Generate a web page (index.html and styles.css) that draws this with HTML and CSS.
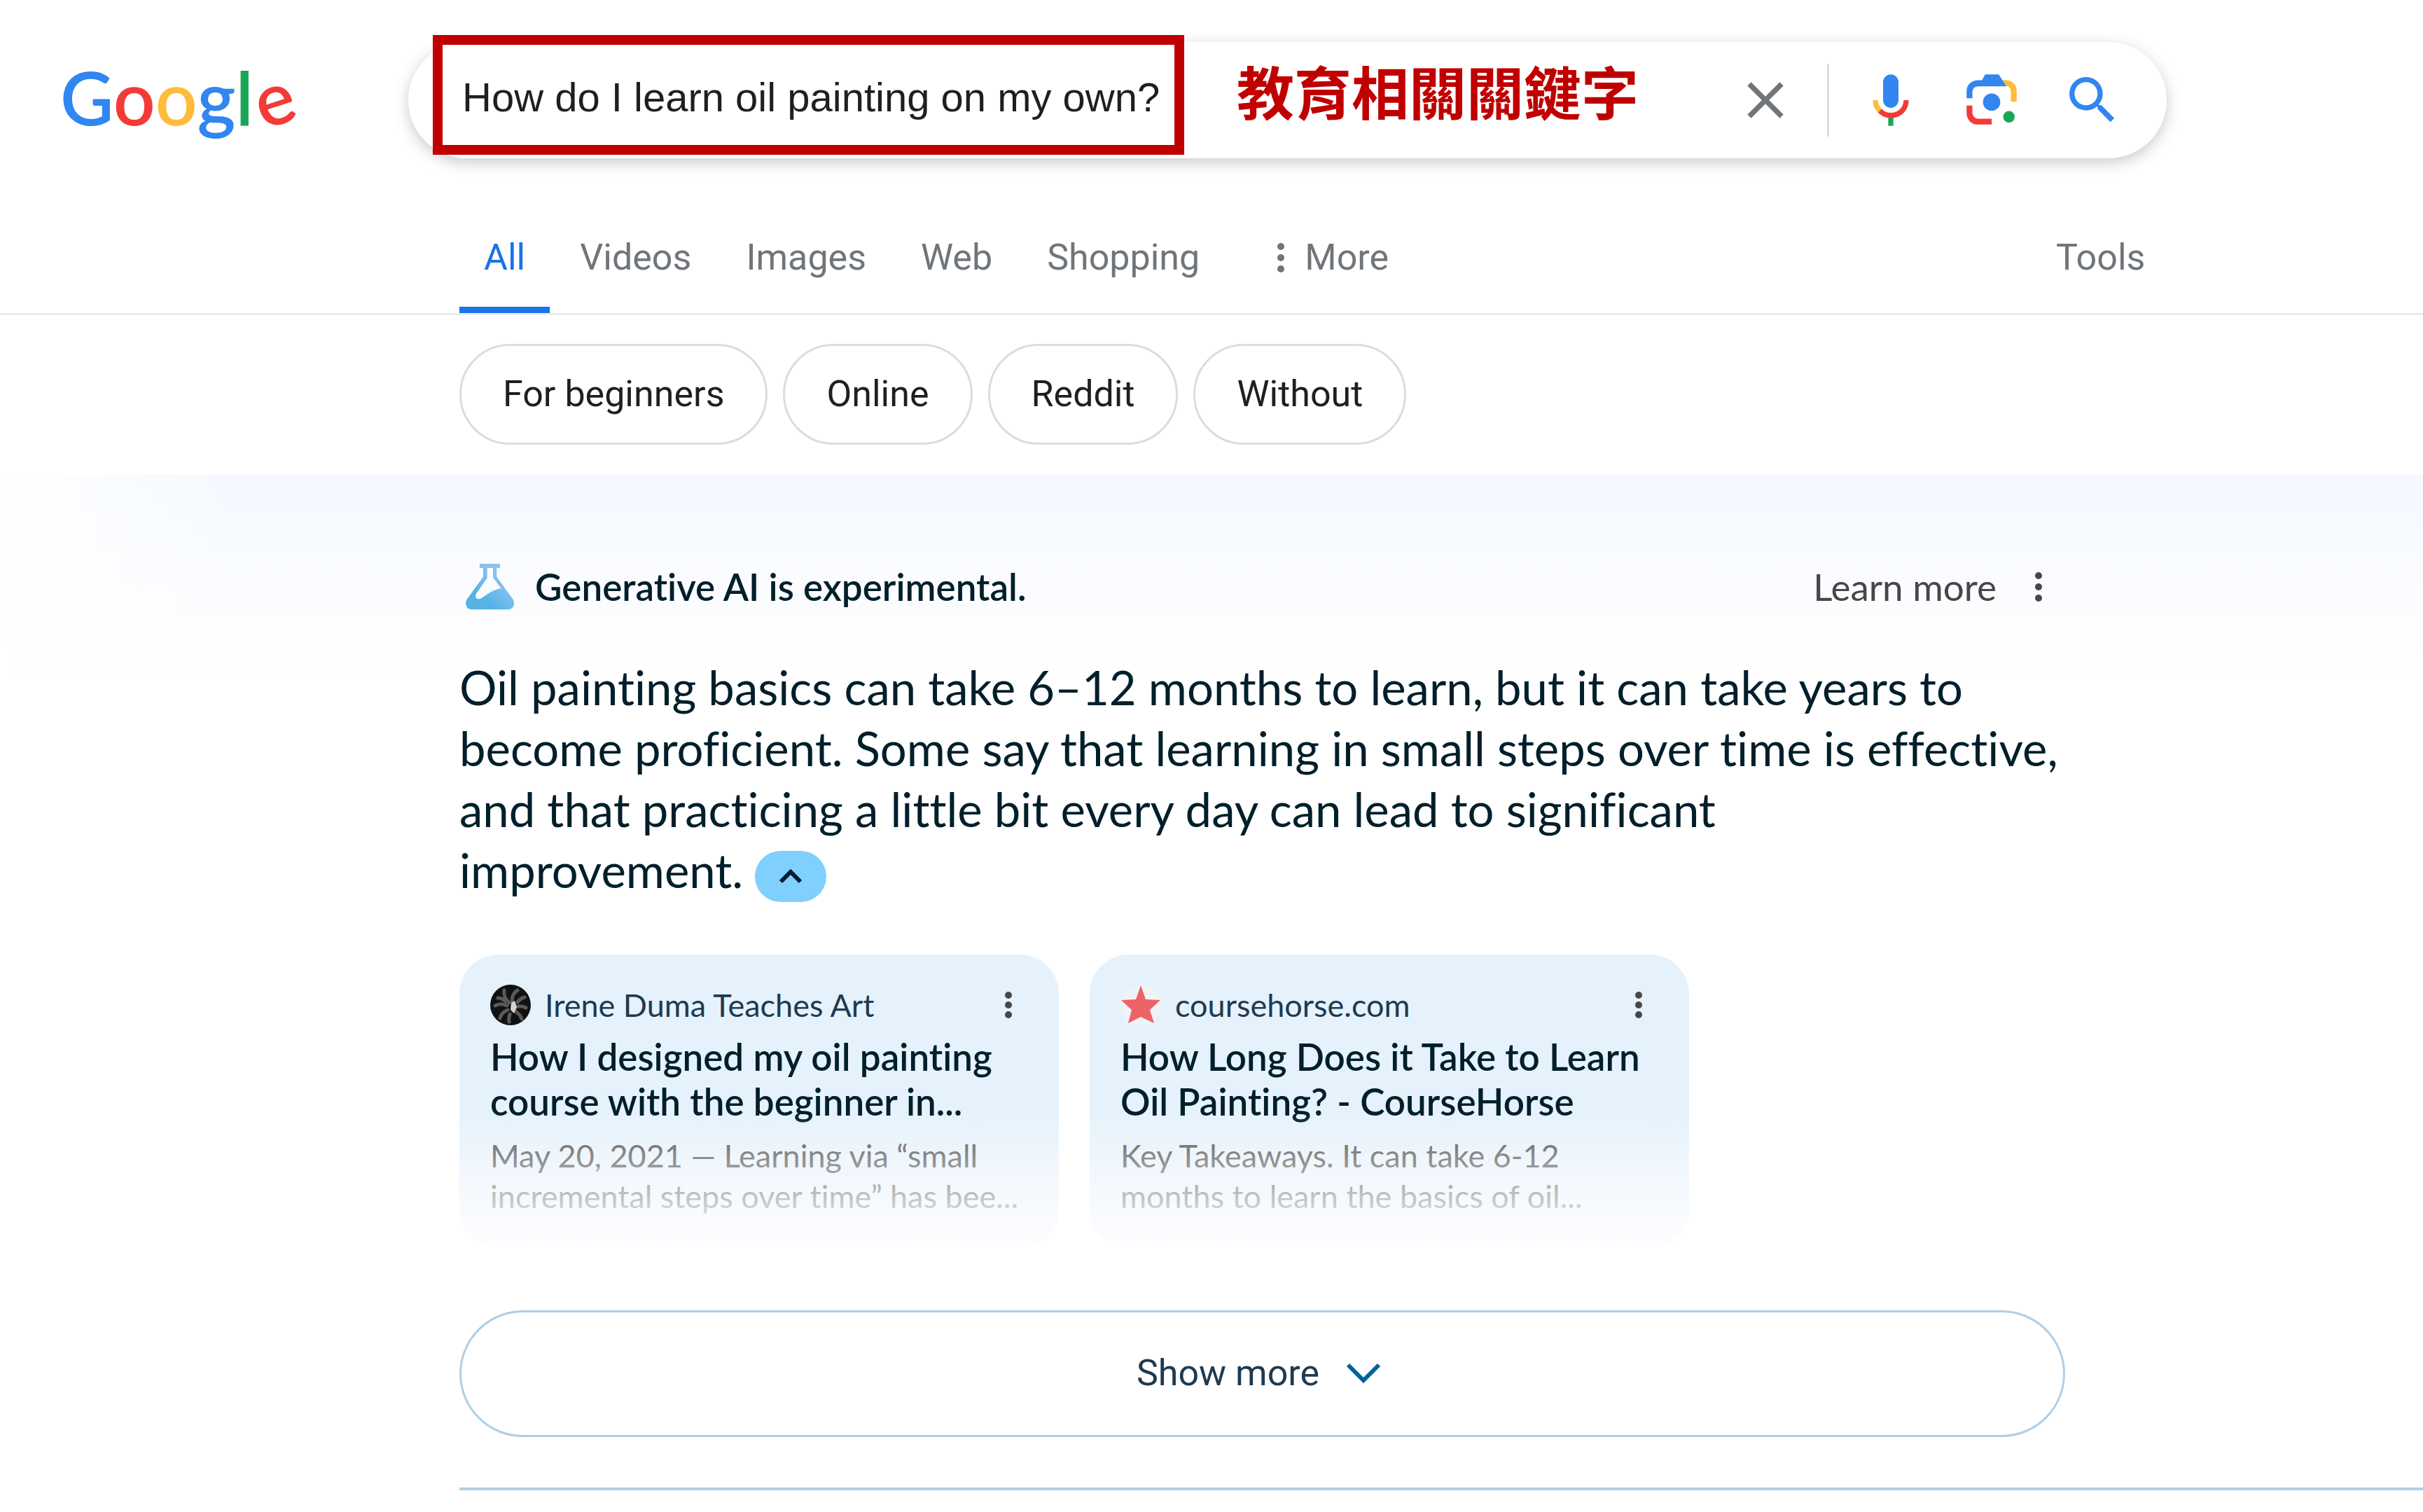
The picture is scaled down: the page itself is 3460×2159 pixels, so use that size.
FILE: index.html
```
<!DOCTYPE html>
<html lang="en">
<head>
  <meta charset="UTF-8">
  <title>How do I learn oil painting on my own? - Google Search</title>
  <link rel="stylesheet" href="styles.css">
</head>
<body>
  <header class="header">
    <a class="logo" href="#" aria-label="Google"><span class="blue">G</span><span class="red">o</span><span class="yellow">o</span><span class="blue">g</span><span class="green">l</span><span class="red tilt">e</span></a>
    <form class="search-bar">
      <input class="query" type="text" aria-label="Search" value="How do I learn oil painting on my own?">
      <span class="note" lang="zh-Hant">教育相關關鍵字</span>
      <div class="search-icons">
        <button type="button" class="icon-btn" aria-label="Clear">
          <svg viewBox="0 0 24 24"><path fill="#70757a" d="M19 6.41L17.59 5 12 10.59 6.41 5 5 6.41 10.59 12 5 17.59 6.41 19 12 13.41 17.59 19 19 17.59 13.41 12z"/></svg>
        </button>
        <span class="separator"></span>
        <button type="button" class="icon-btn" aria-label="Search by voice">
          <svg viewBox="0 0 24 24">
            <path fill="#3186f0" d="M12 15c1.66 0 3-1.31 3-2.97V5.01C15 3.35 13.66 2 12 2S9 3.34 9 5.01v7.02C9 13.69 10.34 15 12 15z"/>
            <path fill="#1aa657" d="M11 18.08h2V22h-2z"/>
            <path fill="#ffbc3b" d="M7.05 16.87C5.78 15.54 5 14.04 5 12h2c0 1.45.56 2.42 1.47 3.38v.32l-1.15 1.18z"/>
            <path fill="#f23b37" d="M12 16.93a4.97 5.25 0 0 1-3.54-1.55l-1.41 1.49C8.31 18.21 10.07 19 12 19c3.87 0 6.99-2.92 6.99-7H17c0 2.92-2.24 4.93-5 4.93z"/>
          </svg>
        </button>
        <button type="button" class="icon-btn" aria-label="Search by image">
          <svg viewBox="0 0 192 192">
            <circle fill="#1aa657" cx="150" cy="148" r="18"/>
            <circle fill="#3186f0" cx="96" cy="102" r="27"/>
            <path fill="#f23b37" d="M18 136c0 20 14 36 34 36h44v-18H56c-12 0-20-9-20-21v-20H18z"/>
            <path fill="#ffbc3b" d="M174 68c0-20-14-34-34-34h-16l16 18c10 0 16 7 16 17v32h18z"/>
            <path fill="#3186f0" d="M118 16H76L66 34H54C34 34 18 48 18 68v22h18V72c0-12 8-19 20-19h86z"/>
          </svg>
        </button>
        <button type="submit" class="icon-btn" aria-label="Google Search">
          <svg viewBox="0 0 24 24"><path fill="#3186f0" d="M15.500 14h-.79l-.28-.27A6.471 6.471 0 0 0 16 9.500 6.500 6.500 0 1 0 9.500 16c1.610 0 3.090-.59 4.230-1.570l.27.28v.79l5 4.990L20.490 19l-4.990-5zm-6 0C7.010 14 5 11.990 5 9.500S7.010 5 9.500 5 14 7.010 14 9.500 11.990 14 9.500 14z"/></svg>
        </button>
      </div>
      <span class="highlight"></span>
    </form>
  </header>

  <nav class="tabs">
    <a class="tab active" href="#">All</a>
    <a class="tab" href="#">Videos</a>
    <a class="tab" href="#">Images</a>
    <a class="tab" href="#">Web</a>
    <a class="tab" href="#">Shopping</a>
    <button class="tab more" type="button">
      <svg class="dots" viewBox="0 0 12 44"><circle cx="6" cy="6" r="5"/><circle cx="6" cy="22" r="5"/><circle cx="6" cy="38" r="5"/></svg>
      More
    </button>
    <button class="tab tools" type="button">Tools</button>
  </nav>

  <div class="chips">
    <a class="chip" href="#">For beginners</a>
    <a class="chip" href="#">Online</a>
    <a class="chip" href="#">Reddit</a>
    <a class="chip" href="#">Without</a>
  </div>

  <main class="ai">
    <div class="ai-content">
      <div class="ai-head">
        <svg class="flask" viewBox="45 47 207 198">
          <defs>
            <linearGradient id="flask-fill" x1="0" y1="1" x2="1" y2="0">
              <stop offset="0.3" stop-color="#55b3e6"/>
              <stop offset="0.7" stop-color="#8bc1f0"/>
            </linearGradient>
          </defs>
          <path fill="url(#flask-fill)" fill-rule="evenodd" d="M105 47h87v18h-14v38l68 94c14 20 4 46-18 46H70c-22 0-32-26-18-46l68-94V65h-15zM137 65v43l-46 66c-9 14 0 28 16 23 20-7 34-32 90-45l-35-46V65z"/>
        </svg>
        <strong class="ai-title">Generative AI is experimental.</strong>
        <a class="learn" href="#">Learn more</a>
        <button class="dots-btn" type="button" aria-label="More options">
          <svg class="dots" viewBox="0 0 12 44"><circle cx="6" cy="6" r="5"/><circle cx="6" cy="22" r="5"/><circle cx="6" cy="38" r="5"/></svg>
        </button>
      </div>

      <p class="answer">Oil painting basics can take 6–12 months to learn, but it can take years to become proficient. Some say that learning in small steps over time is effective, and that practicing a little bit every day can lead to significant <span class="last">improvement. <button class="collapse" type="button" aria-label="Hide sources"><svg viewBox="0 0 34 22"><path d="M3 19L17 5l14 14"/></svg></button></span></p>

      <div class="cards">
        <article class="card">
          <div class="card-head">
            <svg class="favicon" viewBox="0 0 58 58">
              <circle cx="29" cy="29" r="29" fill="#101113"/>
              <g fill="none" stroke="#8d8a84" stroke-width="5" stroke-linecap="round" opacity="0.6">
                <path d="M27 26C21 20 19 14 20 8M31 24c0-7 3-13 8-16M24 30c-6-3-12-3-17 0M25 36c-5 2-10 6-11 12M37 32c5-2 9-2 14 1M36 38c4 3 8 6 9 11M28 42c-1 4-2 7-1 11M39 25c3-4 6-6 10-7M22 24c-3-3-7-5-11-5"/>
              </g>
              <path d="M30 26l5-3 3 9-4 9-5-5z" fill="#d8d5ce"/>
            </svg>
            <span class="source">Irene Duma Teaches Art</span>
            <button class="dots-btn" type="button" aria-label="About this result">
              <svg class="dots" viewBox="0 0 12 44"><circle cx="6" cy="8" r="5"/><circle cx="6" cy="22" r="5"/><circle cx="6" cy="36" r="5"/></svg>
            </button>
          </div>
          <h3>How I designed my oil painting<br>course with the beginner in...</h3>
          <p>May 20, 2021 — Learning via “small<br>incremental steps over time” has bee...</p>
        </article>
        <article class="card">
          <div class="card-head">
            <svg class="favicon" viewBox="0 0 58 58">
              <circle cx="29" cy="29" r="29" fill="#f0f2f5"/>
              <path d="M29 1l7 20 21 1-15 14 6 19-19-9-18 9 5-19L1 22l21-1z" fill="#ec6468"/>
            </svg>
            <span class="source">coursehorse.com</span>
            <button class="dots-btn" type="button" aria-label="About this result">
              <svg class="dots" viewBox="0 0 12 44"><circle cx="6" cy="8" r="5"/><circle cx="6" cy="22" r="5"/><circle cx="6" cy="36" r="5"/></svg>
            </button>
          </div>
          <h3>How Long Does it Take to Learn<br>Oil Painting? - CourseHorse</h3>
          <p>Key Takeaways. It can take 6-12<br>months to learn the basics of oil...</p>
        </article>
      </div>

      <button class="show-more" type="button">
        Show more
        <svg viewBox="0 0 50 30"><path d="M3 3l22 22L47 3"/></svg>
      </button>
    </div>
    <hr>
  </main>
</body>
</html>
```
FILE: styles.css
```
* {
  box-sizing: border-box;
}
body {
  margin: 0;
  background: #fff;
  color: #1f1f1f;
  font-family: Roboto, "Liberation Sans", sans-serif;
  font-size: 52px;
  line-height: 60px;
  overflow-x: hidden;
}
a {
  color: inherit;
  text-decoration: none;
}
button {
  padding: 0;
  border: none;
  background: none;
  color: inherit;
  font: inherit;
  cursor: pointer;
}
svg {
  display: block;
}

/* header */
.header {
  display: flex;
  padding-top: 60px;
}
.logo {
  flex: none;
  width: 583px;
  padding-left: 86px;
  font-family: Lato, sans-serif;
  font-size: 105px;
  font-weight: 600;
  line-height: 156px;
}
.blue { color: #3186f0; }
.red { color: #f23b37; }
.yellow { color: #ffbc3b; }
.green { color: #1aa657; }
.tilt {
  display: inline-block;
  transform: rotate(-18deg);
}
.search-bar {
  position: relative;
  display: flex;
  align-items: center;
  flex: 1;
  max-width: 2511px;
  height: 166px;
  padding: 0 62px 0 77px;
  border-radius: 83px;
  background: #fff;
  box-shadow: 0 6px 20px rgba(60, 64, 67, 0.28);
}
.query {
  width: 1078px;
  padding: 0 0 10px;
  border: none;
  outline: none;
  background: none;
  color: #1f1f1f;
  font-family: "Liberation Sans", Arial, sans-serif;
  font-size: 58px;
}
/* red frame drawn over the query */
.highlight {
  position: absolute;
  top: -10px;
  bottom: 5px;
  left: 35px;
  width: 1073px;
  border: 14px solid #c00000;
  pointer-events: none;
}
.note {
  margin-left: 28px;
  padding-bottom: 28px;
  color: #c00000;
  font-family: "Noto Sans CJK TC", sans-serif;
  font-size: 82px;
  font-weight: 700;
  line-height: 90px;
  white-space: nowrap;
}
.search-icons {
  display: flex;
  align-items: center;
  gap: 56px;
  margin-left: auto;
}
.icon-btn {
  width: 88px;
  height: 88px;
}
.separator {
  width: 3px;
  height: 104px;
  margin: 0 -12px;
  background: #dadce0;
}

/* tabs */
.tabs {
  display: flex;
  gap: 8px;
  margin-top: 112px;
  padding-left: 656px;
  border-bottom: 3px solid #ebebeb;
  color: #70757a;
}
.tab {
  padding: 0 35px 40px;
  border-bottom: 9px solid transparent;
}
.tab.active {
  border-color: #1a73e8;
  color: #1a73e8;
}
.dots {
  width: 12px;
  height: 44px;
  fill: currentColor;
}
.more {
  display: flex;
  align-items: center;
  gap: 28px;
  margin-left: 32px;
}
.tools {
  margin-left: 875px;
}

/* chips */
.chips {
  display: flex;
  gap: 22px;
  padding: 41px 0 43px 656px;
}
.chip {
  padding: 39px 59px;
  border: 3px solid #dadce0;
  border-radius: 72px;
}

/* generative answer */
.ai {
  padding: 116px 0 0 656px;
  background:
    linear-gradient(to right, #fff, rgba(255, 255, 255, 0) 340px),
    linear-gradient(#f3f9ff, #fbfcff 160px, #fff 290px);
  color: #001f2b;
  font-family: Lato, "Open Sans", sans-serif;
  font-variant-ligatures: no-common-ligatures;
}
.ai-content {
  max-width: 2293px;
}
.ai-head {
  display: flex;
  align-items: center;
  height: 88px;
  padding: 0 32px 0 9px;
  font-size: 53px;
}
.flask {
  width: 69px;
  height: 66px;
}
.ai-title {
  margin-left: 30px;
  font-weight: 600;
}
.learn {
  margin-left: auto;
  color: #474747;
}
.dots-btn {
  color: #474747;
}
.ai-head .dots-btn {
  margin-left: 54px;
}
.answer {
  margin: 56px 0 0;
  font-size: 67px;
  line-height: 87px;
}
.last {
  white-space: nowrap;
}
.collapse {
  display: inline-flex;
  align-items: center;
  justify-content: center;
  width: 102px;
  height: 73px;
  border-radius: 37px;
  background: #7fcfff;
  vertical-align: middle;
}
.collapse svg {
  width: 34px;
  height: 22px;
}
.collapse path,
.show-more path {
  fill: none;
  stroke: #001d35;
  stroke-width: 6;
}
.cards {
  display: flex;
  gap: 44px;
  margin-top: 75px;
}
.card {
  position: relative;
  width: 856px;
  padding: 42px 0 44px 44px;
  border-radius: 56px;
  background: #e6f2fb;
  white-space: nowrap;
  overflow: hidden;
}
.card::after {
  content: "";
  position: absolute;
  inset: 0;
  background: linear-gradient(rgba(253, 253, 255, 0) 54%, rgba(253, 253, 255, 0.4) 70%, #fdfdff 98%);
  pointer-events: none;
}
.card-head {
  display: flex;
  align-items: center;
  padding-right: 66px;
  font-size: 45px;
}
.favicon {
  width: 58px;
  height: 58px;
}
.source {
  margin-left: 20px;
  color: #1e3a50;
}
.card .dots-btn {
  margin-left: auto;
}
.card h3 {
  margin: 12px 0 16px;
  font-size: 53px;
  font-weight: 600;
  line-height: 64px;
}
.card p {
  margin: 0;
  color: #474747;
  font-size: 45px;
  line-height: 58px;
}
.show-more {
  display: flex;
  align-items: center;
  justify-content: center;
  gap: 38px;
  width: 100%;
  height: 181px;
  margin-top: 90px;
  padding-right: 10px;
  border: 3px solid #afcfe6;
  border-radius: 91px;
  color: #1e3a50;
  font-family: Roboto, sans-serif;
}
.show-more svg {
  width: 50px;
  height: 30px;
}
.show-more path {
  stroke: #00639b;
}
hr {
  height: 4px;
  margin: 72px 0 0;
  border: none;
  background: #afcfe6;
}
```
